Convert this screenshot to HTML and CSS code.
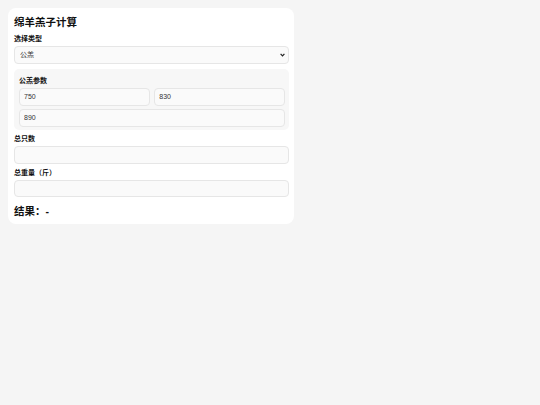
FILE: index.html
```html
<!DOCTYPE html>
<html lang="zh">
<head>
<meta charset="utf-8">
<title>绵羊羔子计算</title>
<link rel="stylesheet" href="styles.css">
</head>
<body>
<div class="card">
  <h1 class="title">绵羊羔子计算</h1>
  <label class="label">选择类型</label>
  <div class="select-wrap">
    <select class="field select">
      <option>公羔</option>
      <option>母羔</option>
    </select>
    <svg class="chevron" width="5" height="4" viewBox="0 0 5 4"><path d="M0.6 0.8 L2.5 2.9 L4.4 0.8" fill="none" stroke="#222" stroke-width="1.2"/></svg>
  </div>
  <div class="group">
    <div class="label group-label">公羔参数</div>
    <div class="grid">
      <input class="field" type="text" value="750">
      <input class="field" type="text" value="830">
      <input class="field span" type="text" value="890">
    </div>
  </div>
  <label class="label">总只数</label>
  <input class="field" type="text" value="">
  <label class="label">总重量（斤）</label>
  <input class="field" type="text" value="">
  <div class="result">结果：-</div>
</div>
</body>
</html>
```

FILE: styles.css
```css
html, body {
  margin: 0;
  padding: 0;
}
body {
  background: #f5f5f5;
  padding: 8px;
  font-family: "Liberation Sans", "Noto Sans CJK SC", sans-serif;
  color: #111;
}
.card {
  box-sizing: border-box;
  width: 286px;
  background: #ffffff;
  border-radius: 8px;
  padding: 6px 5px 5px 6px;
  display: flex;
  flex-direction: column;
}
.title {
  margin: 0;
  font-size: 10.5px;
  line-height: 16px;
  font-weight: 700;
}
.label {
  display: block;
  font-size: 7px;
  line-height: 10px;
  font-weight: 700;
  margin: 4px 0 2px;
}
.field {
  box-sizing: border-box;
  display: block;
  width: 100%;
  height: 17.5px;
  margin: 0;
  border: 1px solid #e6e6e6;
  border-radius: 4px;
  background: #fafafa;
  font-family: "Liberation Sans", "Noto Sans CJK SC", sans-serif;
  font-size: 7px;
  color: #333;
  padding: 0 4px;
  outline: none;
}
.select-wrap {
  position: relative;
}
.select {
  -webkit-appearance: none;
  appearance: none;
  padding: 0 12px 0 5px;
}
.chevron {
  position: absolute;
  right: 4px;
  top: 7px;
  pointer-events: none;
}
.group {
  margin-top: 5px;
  background: #f7f7f7;
  border-radius: 5px;
  padding: 5.5px 4px 3.5px 5px;
}
.group-label {
  margin-top: 2px;
}
.grid {
  display: grid;
  grid-template-columns: 1fr 1fr;
  gap: 3.5px 4.5px;
}
.span {
  grid-column: 1 / span 2;
}
.result {
  margin-top: 5.5px;
  font-size: 10.5px;
  line-height: 16px;
  font-weight: 700;
}
```
